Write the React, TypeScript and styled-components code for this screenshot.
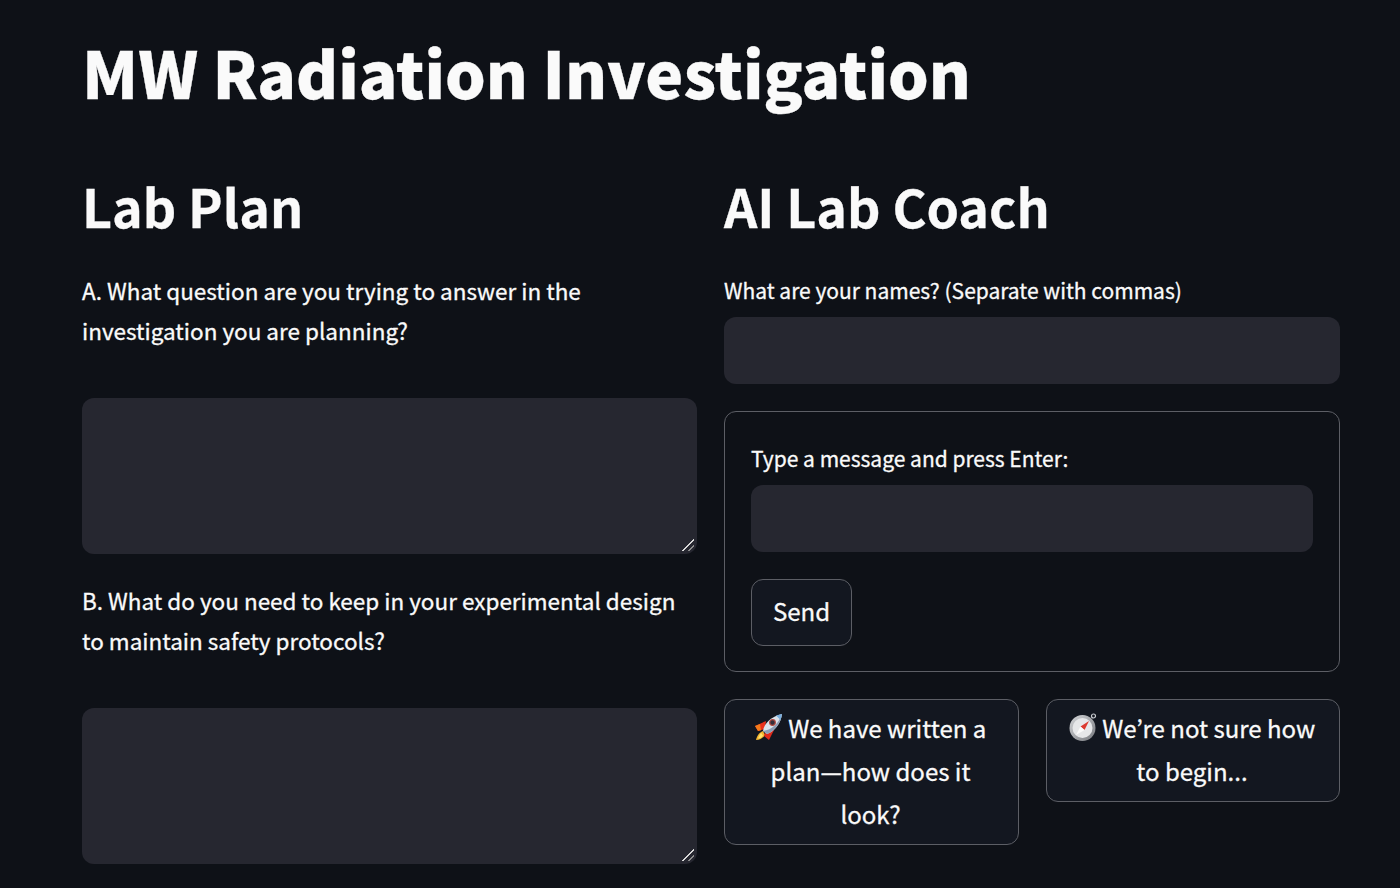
import * as React from "react";
import styled, { createGlobalStyle } from "styled-components";

const GlobalStyle = createGlobalStyle`
  html, body {
    margin: 0;
    height: 100%;
    background: #0e1117;
  }
  body {
    overflow: hidden;
    font-family: "Noto Sans CJK JP", "Noto Sans", sans-serif;
    color: #fafafa;
    -webkit-text-stroke: 0.3px #fafafa;
  }
`;

const RocketIcon = () => (
  <EmojiSvg viewBox="0 0 28 28" aria-hidden="true">
    <path d="M8 18c-3 1-6 4-7 9 4 0 7-2 9-5z" fill="#f5b52e" />
    <path d="M6 20c-1 1-2 3-3 5.500 2.500 0 4-1 5-3z" fill="#fde36f" />
    <path d="M11 8L0 13l3 5 7-2z" fill="#e8301c" />
    <path d="M5 11l-5 2 3 5 3-.7z" fill="#f47a1a" />
    <path d="M19 17l-5 10-5-4 2-6z" fill="#e02a1a" />
    <path d="M8 18C9 10 17 3 27 1c-1 9-7 17-15 20z" fill="#dbe3ec" />
    <path d="M8 18l4 3c8-3 14-11 15-20-3 9-10 16-19 17z" fill="#8c9db4" />
    <circle cx="17.500" cy="9.500" r="2.800" fill="#33303c" stroke="#b0483f" strokeWidth="1.200" />
    <path d="M21 2.600L27 1l-1.500 6z" fill="#78aede" />
  </EmojiSvg>
);

const CompassIcon = () => (
  <EmojiSvg viewBox="0 0 28 28" aria-hidden="true">
    <defs>
      <linearGradient id="compassRing" x1="0" y1="0" x2="1" y2="1">
        <stop offset="0" stopColor="#d5d7da" />
        <stop offset="1" stopColor="#77797e" />
      </linearGradient>
    </defs>
    <circle cx="24.500" cy="3" r="2" fill="none" stroke="#c9ccd1" strokeWidth="1.200" />
    <circle cx="13.500" cy="15" r="13" fill="url(#compassRing)" />
    <circle cx="13.500" cy="15" r="10" fill="#e6e7e9" />
    <path d="M20 8l-8.500 5.500 4 3.500z" fill="#dc3a30" />
    <path d="M7 22l8.500-5-4-3.500z" fill="#fbfbfb" />
  </EmojiSvg>
);

const App: React.FC = () => {
  return (
    <Page>
      <GlobalStyle />
      <Title>MW Radiation Investigation</Title>
      <Columns>
        <Column>
          <Heading>Lab Plan</Heading>
          <Question>
            A. What question are you trying to answer in the investigation you
            are planning?
          </Question>
          <TextArea aria-label="Question A" />
          <Question>
            B. What do you need to keep in your experimental design to maintain
            safety protocols?
          </Question>
          <TextArea aria-label="Question B" />
        </Column>
        <Column>
          <Heading>AI Lab Coach</Heading>
          <NamesField>
            <FieldLabel>What are your names? (Separate with commas)</FieldLabel>
            <TextInput aria-label="Names" />
          </NamesField>
          <ChatForm>
            <FieldLabel>Type a message and press Enter:</FieldLabel>
            <TextInput aria-label="Message" />
            <SendButton>Send</SendButton>
          </ChatForm>
          <QuickActions>
            <QuickButton>
              <RocketIcon /> We have written a plan—how does it look?
            </QuickButton>
            <QuickButton>
              <CompassIcon /> We’re not sure how to begin...
            </QuickButton>
          </QuickActions>
        </Column>
      </Columns>
    </Page>
  );
};

const Page = styled.div`
  box-sizing: border-box;
  width: 1400px;
  height: 888px;
  overflow: hidden;
  padding: 26px 60px 0 82px;
  background: #0e1117;
`;

const Title = styled.h1`
  margin: 0 0 52px;
  font-size: 64px;
  line-height: 90px;
  font-weight: 900;
  height: 90px;
  color: #fafafa;
`;

const Columns = styled.div`
  display: grid;
  grid-template-columns: 615px 616px;
  column-gap: 27px;
  align-items: start;
`;

const Column = styled.div`
  display: flex;
  flex-direction: column;
`;

const Heading = styled.h2`
  margin: 0 0 26px;
  height: 76px;
  font-size: 52px;
  line-height: 76px;
  font-weight: 700;
  color: #fafafa;
`;

const Question = styled.p`
  margin: 0 0 48px;
  font-size: 22.5px;
  line-height: 40px;
  height: 80px;
  color: #fafafa;
`;

const TextArea = styled.div`
  position: relative;
  height: 156px;
  margin-bottom: 26px;
  border-radius: 12px;
  background: #262730;

  &::after {
    content: "";
    position: absolute;
    right: 3px;
    bottom: 3px;
    width: 12px;
    height: 12px;
    background: linear-gradient(
      135deg,
      transparent 46%,
      #d8d8d8 46%,
      #d8d8d8 56%,
      transparent 56%,
      transparent 72%,
      #8a8a8a 72%,
      #8a8a8a 80%,
      transparent 80%
    );
  }
`;

const NamesField = styled.div`
  padding-top: 4px;
`;

const FieldLabel = styled.label`
  display: block;
  font-size: 21px;
  line-height: 32px;
  height: 32px;
  margin-bottom: 11px;
  color: #fafafa;
`;

const TextInput = styled.div`
  height: 67px;
  border-radius: 12px;
  background: #262730;
`;

const ChatForm = styled.div`
  box-sizing: border-box;
  height: 261px;
  margin-top: 27px;
  padding: 30px 26px 0;
  border: 1.5px solid #5c5e65;
  border-radius: 12px;
`;

const SendButton = styled.button`
  display: block;
  box-sizing: border-box;
  width: 101px;
  height: 67px;
  margin-top: 27px;
  padding: 0 0 5px;
  border: 1.5px solid #5c5e65;
  border-radius: 12px;
  background: #131720;
  color: #fafafa;
  font: inherit;
  font-size: 24px;
`;

const QuickActions = styled.div`
  display: grid;
  grid-template-columns: 295px 294px;
  column-gap: 27px;
  align-items: start;
  margin-top: 27px;
`;

const QuickButton = styled.button`
  box-sizing: border-box;
  padding: 6px 22px 9px 20px;
  border: 1.5px solid #5c5e65;
  border-radius: 12px;
  background: #131720;
  color: #fafafa;
  font: inherit;
  font-size: 24px;
  line-height: 43px;
  text-align: center;
`;

const EmojiSvg = styled.svg`
  display: inline-block;
  width: 28px;
  height: 28px;
  vertical-align: -3px;
`;

export default App;
